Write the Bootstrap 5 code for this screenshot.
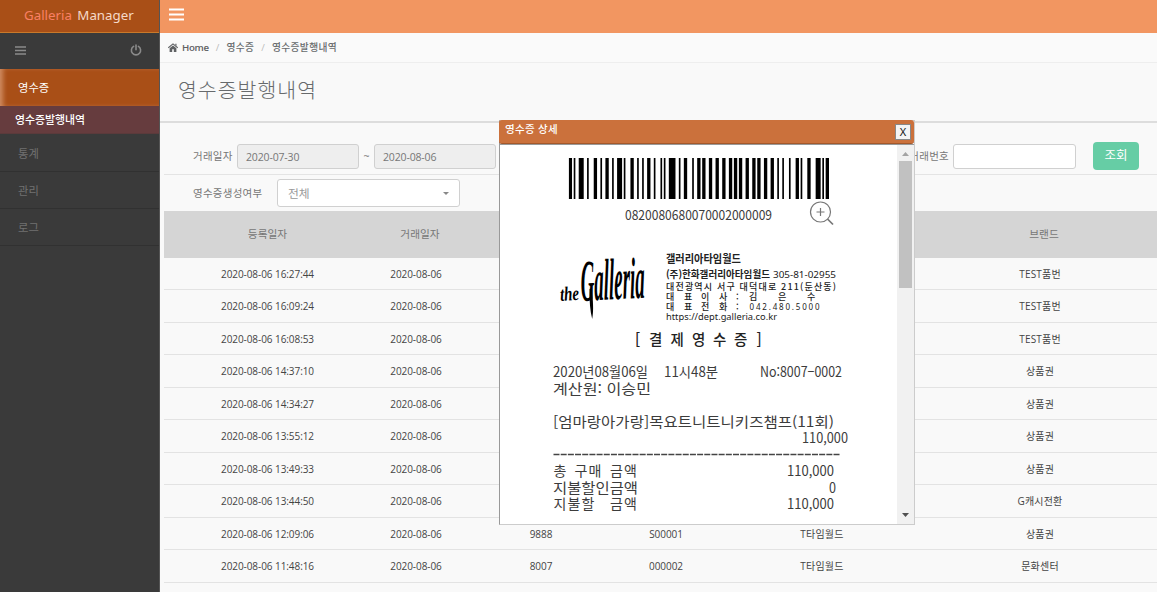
<!DOCTYPE html>
<html lang="ko">
<head>
<meta charset="utf-8">
<title>Galleria Manager</title>
<meta name="viewport" content="width=device-width, initial-scale=1">
<link href="https://cdn.jsdelivr.net/npm/bootstrap@5.3.0/dist/css/bootstrap.min.css" rel="stylesheet">
<style>
body{font-family:"Open Sans","Noto Sans CJK KR",sans-serif;font-size:10.5px;line-height:1.2;color:#676a6c;background:#f9f9f9;height:592px;overflow:hidden}
.side{width:160px;height:592px;background:#3a3a3a;border-right:1px solid #555;color:#858585}
.brand{height:33px;background:#a94f17;border-bottom:1px solid #c8792b;font:13.3px/30px "Noto Sans",sans-serif;color:#f6d9c8;padding-left:24px;letter-spacing:0}
.brand span{color:#fa8064;margin-right:2px}
.tools{height:36px;padding:0 17px 2px 15px}
.side .item{height:37px;padding:1px 0 0 18px;border-bottom:1px solid #313131;color:#717171;font-size:11.3px}
.side .item.on{background:#a94f17;color:#fff;border:0;box-shadow:inset 5px 0 5px -2px #d08c62}
.side .sub{height:28px;padding:1px 0 0 15px;background:#663c3e;color:#fff;font-size:10.9px;font-weight:500;border-bottom:1px solid #5b3a3b}
.side .sub+.item{height:38px;padding-top:2px}
.topbar{height:33px;background:#f29661;padding:8px 0 0 9px}
.crumbs{height:30px;border-bottom:1px solid #eee;padding-left:8px;font-size:9.7px;font-weight:500;background:#fafafa}
.crumbs b{font-weight:600;color:#5f6163;letter-spacing:-.3px}
.crumbs span{letter-spacing:.4px}
.crumbs i{color:#bbb;font-style:normal;padding:0 7px}
.title{height:60px;border-bottom:2px solid #ddd;padding:0 0 3px 18px;font-size:20.5px;font-weight:300;color:#676a6c;margin:0;letter-spacing:1px}
.filters{margin-left:4px;border-bottom:1px solid #e4e4e4;color:#777}
.filters .form-control{font-size:10.5px;color:#777;border:1px solid #d0d0d0;border-radius:3px;height:25px;padding:0 8px;background-color:#fff;line-height:24px}
.filters label{letter-spacing:.25px}
.filters .date{background:#eee;width:122px;letter-spacing:-.15px}
.filters .choice{width:183px;height:28px;font-size:11.8px;padding:0 10px;color:#999;border:1px solid #d0d0d0;border-radius:3px;background:#fff}
.caret{border:3px solid transparent;border-top-color:#888;border-bottom:0}
.go{width:46px;height:28px;margin-top:-1px;background:#66cda5;color:#fff;font-size:12.5px;border-radius:4px;padding:1px 0 0;border:0}
.grid{margin-left:4px;width:993px;table-layout:fixed;text-align:center;color:#444;font-size:10px;border-collapse:separate;border-spacing:0}
.grid th{height:46.5px;background:#d5d5d5;color:#777;font-weight:400;font-size:10.7px;padding:1px 0 0}
.grid th.off{padding-left:8px}
.grid td{height:32.5px;padding:1px 0 0;border-bottom:1px solid #e3e3e3;letter-spacing:-.07px}
.grid td:nth-child(n+5){letter-spacing:.2px}
.pop{position:absolute;left:499px;top:120px;width:416px;height:405px;border:1px solid #ccc;border-left-color:#999;background:#fff}
.pop-head{height:24px;margin:-1px 0 0 -1px;background:#cb713c;border-radius:3px;color:#fff;padding:3px 3px 0 6px;font-size:10.5px;letter-spacing:.35px;font-weight:500;border-bottom:1px solid #a3582b;width:415px}
.x{width:16px;height:16px;margin-top:1px;background:#f4f4f4;border:1px solid #888;color:#111;font:11px/14px "Noto Sans",sans-serif;text-align:center;padding:0}
.pop-body{height:380px;border-top:1px solid #999}
.sb{width:17px;height:379px;background:#f1f1f1}
.sb .thumb{width:13px;height:127px;background:#c1c1c1}
.receipt text{font-family:"Noto Sans CJK KR",sans-serif;font-size:14px;fill:#3c3c3c;white-space:pre}
.receipt .hd text{fill:#222}
</style>
</head>
<body>
<div class="d-flex">
<aside class="side flex-shrink-0">
 <div class="brand"><span>Galleria</span> Manager</div>
 <div class="tools d-flex align-items-center justify-content-between">
  <svg width="11" height="9" stroke="#8a8a8a" stroke-width="1.4"><path d="M0 1h11M0 4.5h11M0 8h11"/></svg>
  <svg width="12" height="12" fill="none" stroke="#8a8a8a" stroke-width="1.6" stroke-linecap="round"><path d="M3.6 2.4a4.6 4.6 0 1 0 4.8 0M6 1v4.7"/></svg>
 </div>
 <div class="item on d-flex align-items-center">영수증</div>
 <div class="sub d-flex align-items-center">영수증발행내역</div>
 <div class="item d-flex align-items-center">통계</div>
 <div class="item d-flex align-items-center">관리</div>
 <div class="item d-flex align-items-center">로그</div>
</aside>
<main class="flex-grow-1" style="min-width:0">
 <div class="topbar"><svg class="d-block" width="15" height="13" stroke="#fff" stroke-width="2"><path d="M0 1.5h15M0 6.5h15M0 11.5h15"/></svg></div>
 <div class="crumbs d-flex align-items-center">
  <svg class="me-1" width="10" height="9" viewBox="0 0 10 9"><path d="M.3 4.8 5 .9l4.7 3.9" fill="none" stroke="#5f6163" stroke-width="1.1"/><path d="M1.6 5.2 5 2.4l3.4 2.8V9H5.8V6.3H4.2V9H1.6zM7.3.7h1.2v2.4L7.3 2.1z" fill="#5f6163"/></svg>
  <b>Home</b><i>/</i><span>영수증</span><i>/</i><span>영수증발행내역</span>
 </div>
 <h1 class="title d-flex align-items-center">영수증발행내역</h1>
 <div class="filters d-flex align-items-center" style="height:52px;padding:16px 18px 0 29px">
  <label style="width:44px">거래일자</label>
  <div class="form-control date">2020-07-30</div><span class="text-center" style="width:15px">~</span>
  <div class="form-control date">2020-08-06</div>
  <label class="ms-auto pe-1">거래번호</label>
  <div class="form-control" style="width:123px;margin-right:17px"></div>
  <button class="btn go">조회</button>
 </div>
 <div class="filters d-flex align-items-center border-0" style="height:36px;padding-left:29px">
  <label style="width:84px">영수증생성여부</label>
  <div class="choice d-flex align-items-center justify-content-between">전체<span class="caret"></span></div>
 </div>
 <table class="grid">
  <colgroup><col style="width:207px"><col style="width:90px"><col style="width:160px"><col style="width:90px"><col style="width:222px"><col style="width:214px"><col></colgroup>
  <thead><tr><th>등록일자</th><th class="off">거래일자</th><th></th><th></th><th></th><th class="off">브랜드</th><th></th></tr></thead>
  <tbody>
  <tr><td>2020-08-06 16:27:44</td><td>2020-08-06</td><td></td><td></td><td></td><td>TEST품번</td><td></td></tr>
  <tr><td>2020-08-06 16:09:24</td><td>2020-08-06</td><td></td><td></td><td></td><td>TEST품번</td><td></td></tr>
  <tr><td>2020-08-06 16:08:53</td><td>2020-08-06</td><td></td><td></td><td></td><td>TEST품번</td><td></td></tr>
  <tr><td>2020-08-06 14:37:10</td><td>2020-08-06</td><td></td><td></td><td></td><td>상품권</td><td></td></tr>
  <tr><td>2020-08-06 14:34:27</td><td>2020-08-06</td><td></td><td></td><td></td><td>상품권</td><td></td></tr>
  <tr><td>2020-08-06 13:55:12</td><td>2020-08-06</td><td></td><td></td><td></td><td>상품권</td><td></td></tr>
  <tr><td>2020-08-06 13:49:33</td><td>2020-08-06</td><td></td><td></td><td></td><td>상품권</td><td></td></tr>
  <tr><td>2020-08-06 13:44:50</td><td>2020-08-06</td><td></td><td></td><td></td><td>G캐시전환</td><td></td></tr>
  <tr><td>2020-08-06 12:09:06</td><td>2020-08-06</td><td>9888</td><td>S00001</td><td>T타임월드</td><td>상품권</td><td></td></tr>
  <tr><td>2020-08-06 11:48:16</td><td>2020-08-06</td><td>8007</td><td>000002</td><td>T타임월드</td><td>문화센터</td><td></td></tr>
  </tbody>
 </table>
</main>
</div>

<div class="pop">
 <div class="pop-head d-flex justify-content-between"><span>영수증 상세</span><button class="x">X</button></div>
 <div class="pop-body d-flex">
  <svg class="receipt" width="397" height="379" viewBox="500 145 397 379">
   <!-- Code 128-C: bar and gap widths in modules, one symbol per group -->
   <svg x="568.7" y="158" width="260.3" height="41" viewBox="0 0 156 10" preserveAspectRatio="none"><path d="M0 5H156" stroke="#000" stroke-width="10" stroke-dasharray="2 1 1 2 3 2, 1 3 2 2 1 2, 2 2 1 2 3 1, 1 3 2 2 1 2, 1 2 2 2 1 3, 1 1 1 2 4 2, 1 2 2 3 1 2, 2 1 2 2 2 2, 2 2 2 2 2 1, 2 1 2 2 2 2, 2 1 2 2 2 2, 2 2 1 2 1 3, 1 3 2 1 1 3, 2 3 3 1 1 1 2"/></svg>
   <text x="625" y="220" textLength="147" lengthAdjust="spacingAndGlyphs" style="font-size:13.5px">0820080680070002000009</text>
   <g fill="none" stroke="#777" stroke-width="1.2"><circle cx="820.5" cy="212" r="10"/><path d="M816.5 212h8M820.5 208v8"/><path d="m827.5 219 5.5 5.5" stroke-width="1.7"/></g>
   <g class="hd">
    <g transform="translate(560.5 301) rotate(-4) scale(1 1.35)"><text textLength="19" lengthAdjust="spacingAndGlyphs" style="font:italic bold 15px 'Liberation Serif',serif;fill:#000">the</text></g>
    <g transform="translate(581 301) rotate(-3) scale(1 2.45) skewX(-5)"><text textLength="64" lengthAdjust="spacingAndGlyphs" style="font:italic bold 24px 'Liberation Serif',serif;fill:#000">Galleria</text></g>
    <path d="M592 288c.8 12 2 22 .2 31-2-8-3-18-2.600-30z"/>
    <text x="666" y="263" textLength="75" lengthAdjust="spacingAndGlyphs" style="font-size:11px;font-weight:700">갤러리아타임월드</text>
    <text x="666" y="278" textLength="104" lengthAdjust="spacingAndGlyphs" style="font-size:10px;font-weight:700">(주)한화갤러리아타임월드</text>
    <text x="773" y="278" textLength="63" lengthAdjust="spacingAndGlyphs" style="font-family:'Noto Sans',sans-serif;font-size:9.8px">305-81-02955</text>
    <text x="666" y="290" textLength="170" style="font-size:9px;font-weight:500">대전광역시 서구 대덕대로 211(둔산동)</text>
    <text y="300" x="666 684 701 719 736 749 778 807" style="font-size:9px;font-weight:500">대표이사:김은수</text>
    <text y="310" x="666 684 701 719 736" style="font-size:9px;font-weight:500">대표전화:</text>
    <text y="310" x="749.5" textLength="70" style="font-family:'Noto Sans',sans-serif;font-size:8px">042.480.5000</text>
    <text x="666" y="320" textLength="111" lengthAdjust="spacingAndGlyphs" style="font-family:'Noto Sans',sans-serif;font-size:9px">https://dept.galleria.co.kr</text>
    <text y="345" x="635 649 670.5 692 713 734 756.5" style="font-size:14.5px;font-weight:500">[결제영수증]</text>
   </g>
   <text x="553" y="377" textLength="95" lengthAdjust="spacingAndGlyphs">2020년08월06일</text>
   <text x="664" y="377" textLength="54" lengthAdjust="spacingAndGlyphs">11시48분</text>
   <text x="760" y="377" textLength="82" lengthAdjust="spacingAndGlyphs">No:8007−0002</text>
   <text x="553" y="393.5" textLength="98" lengthAdjust="spacingAndGlyphs">계산원: 이승민</text>
   <text x="553" y="427" textLength="281" lengthAdjust="spacingAndGlyphs">[엄마랑아가랑]목요트니트니키즈챔프(11회)</text>
   <text x="802" y="443" textLength="46" lengthAdjust="spacingAndGlyphs">110,000</text>
   <path d="M553.5 454.5H840" stroke="#444" stroke-width="1.3" stroke-dasharray="6 1.18"/>
   <text x="553.5 574.5 588.5 610 624" y="476">총구매금액</text>
   <text x="787" y="476" textLength="47" lengthAdjust="spacingAndGlyphs">110,000</text>
   <text x="553" y="493" textLength="85" lengthAdjust="spacingAndGlyphs">지불할인금액</text>
   <text x="829" y="493" textLength="7" lengthAdjust="spacingAndGlyphs">0</text>
   <text x="553.5 567.5 581.5 610 624" y="509">지불할금액</text>
   <text x="787" y="509" textLength="47" lengthAdjust="spacingAndGlyphs">110,000</text>
  </svg>
  <div class="sb d-flex flex-column align-items-center">
   <svg width="17" height="16"><path d="M5 11l3.5-4 3.5 4z" fill="#a3a3a3"/></svg>
   <div class="thumb"></div>
   <svg class="mt-auto" width="17" height="17"><path d="M5 6l3.5 4L12 6z" fill="#505050"/></svg>
  </div>
 </div>
</div>
<script src="https://cdn.jsdelivr.net/npm/bootstrap@5.3.0/dist/js/bootstrap.bundle.min.js"></script>
</body>
</html>
